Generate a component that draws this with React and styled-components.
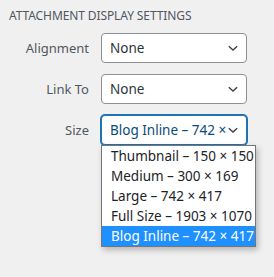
import React from 'react'
import { styled, createGlobalStyle } from 'styled-components'

const Global = createGlobalStyle`
  html, body {
    margin: 0;
    background: #f0f0f1;
  }
  body {
    font-family: "Noto Sans", "Open Sans", sans-serif;
  }
`

const Panel = styled.div`
  padding: 8px 0 12px 9px;
`

const Heading = styled.h2`
  margin: 0 0 8px;
  font-size: 12px;
  font-weight: 400;
  line-height: 16px;
  color: #50575e;
  text-transform: uppercase;
  letter-spacing: -0.1px;
`

const Row = styled.div`
  display: flex;
  align-items: flex-start;
  gap: 12px;
  margin-top: ${p => p.$first ? '9px' : '11px'};
`

const Label = styled.span`
  width: 80px;
  line-height: 30px;
  text-align: right;
  font-size: 13px;
  color: #50575e;
`

const Field = styled.div`
  display: flex;
  flex-direction: column;
  width: 146px;
`

const Select = styled.div`
  box-sizing: border-box;
  height: 30px;
  display: flex;
  align-items: center;
  padding: 0 20px 0 8px;
  background: #fff;
  border: 1px solid ${p => p.$focused ? '#2271b1' : '#8c8f94'};
  box-shadow: ${p => p.$focused ? '0 0 0 1px #2271b1' : 'none'};
  border-radius: 4px;
  font-size: 13.5px;
  color: ${p => p.$focused ? '#0a4b78' : '#2c3338'};
  white-space: nowrap;
  position: relative;
`

const Value = styled.span`
  overflow: hidden;
  flex: 1;
`

const Chevron = styled.svg`
  position: absolute;
  right: 6px;
  top: 50%;
  transform: translateY(-50%);
`

const Menu = styled.div`
  width: 155px;
  flex-shrink: 0;
  box-sizing: border-box;
  background: #fff;
  border: 1px solid #767676;
  box-shadow: 2px 3px 6px rgba(0, 0, 0, 0.25);
  position: relative;
  z-index: 2;
`

const Option = styled.div`
  height: 20px;
  line-height: 20px;
  padding-left: 9px;
  font-size: 13.5px;
  white-space: nowrap;
  color: ${p => p.$selected ? '#fff' : '#1d2327'};
  background: ${p => p.$selected ? '#1e90ff' : 'transparent'};
`

function Arrow() {
  return (
    <Chevron width="14" height="14" viewBox="0 0 20 20">
      <path d="M4 7.5l6 5.5 6-5.5" fill="none" stroke="#3c434a" strokeWidth="2" />
    </Chevron>
  )
}

const sizes = [
  'Thumbnail – 150 × 150',
  'Medium – 300 × 169',
  'Large – 742 × 417',
  'Full Size – 1903 × 1070',
  'Blog Inline – 742 × 417',
]

export default function App() {
  return (
    <Panel>
      <Global />
      <Heading>Attachment Display Settings</Heading>
      <Row $first>
        <Label>Alignment</Label>
        <Field>
          <Select><Value>None</Value><Arrow /></Select>
        </Field>
      </Row>
      <Row>
        <Label>Link To</Label>
        <Field>
          <Select><Value>None</Value><Arrow /></Select>
        </Field>
      </Row>
      <Row>
        <Label>Size</Label>
        <Field>
          <Select $focused><Value>Blog Inline – 742 × 417</Value><Arrow /></Select>
          <Menu>
            {sizes.map((s, i) => (
              <Option key={s} $selected={i === sizes.length - 1}>{s}</Option>
            ))}
          </Menu>
        </Field>
      </Row>
    </Panel>
  )
}
